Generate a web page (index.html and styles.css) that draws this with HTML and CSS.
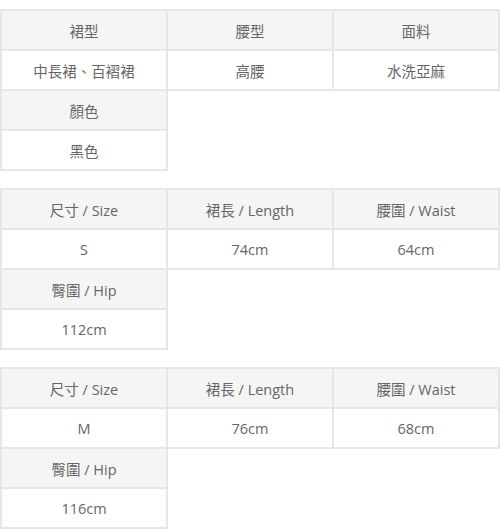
FILE: index.html
```html
<!DOCTYPE html>
<html lang="zh-Hant">
<head>
<meta charset="utf-8">
<link rel="stylesheet" href="styles.css">
</head>
<body>
<div class="page">
  <table class="spec">
    <tr class="head"><td>裙型</td><td>腰型</td><td>面料</td></tr>
    <tr class="val"><td>中長裙、百褶裙</td><td>高腰</td><td>水洗亞麻</td></tr>
    <tr class="head"><td>顏色</td></tr>
    <tr class="val"><td>黑色</td></tr>
  </table>
  <table class="spec">
    <tr class="head"><td>尺寸 / Size</td><td>裙長 / Length</td><td>腰圍 / Waist</td></tr>
    <tr class="val"><td>S</td><td>74cm</td><td>64cm</td></tr>
    <tr class="head"><td>臀圍 / Hip</td></tr>
    <tr class="val"><td>112cm</td></tr>
  </table>
  <table class="spec">
    <tr class="head"><td>尺寸 / Size</td><td>裙長 / Length</td><td>腰圍 / Waist</td></tr>
    <tr class="val"><td>M</td><td>76cm</td><td>68cm</td></tr>
    <tr class="head"><td>臀圍 / Hip</td></tr>
    <tr class="val"><td>116cm</td></tr>
  </table>
</div>
</body>
</html>
```
FILE: styles.css
```css
html, body {
  margin: 0;
  padding: 0;
  background: #fff;
}
.page {
  padding-top: 9px;
  display: flex;
  flex-direction: column;
  gap: 17px;
}
.spec {
  width: 500px;
  border-collapse: collapse;
  table-layout: fixed;
  font-family: "Open Sans", "Noto Sans CJK TC", sans-serif;
  font-size: 14.5px;
  color: #666;
}
.spec td {
  width: 33.333%;
  height: 38px;
  padding: 0;
  border: 2px solid #e6e6e6;
  text-align: center;
  vertical-align: middle;
}
.head td {
  background: #f5f5f5;
}
.val td {
  background: #fff;
}
```
